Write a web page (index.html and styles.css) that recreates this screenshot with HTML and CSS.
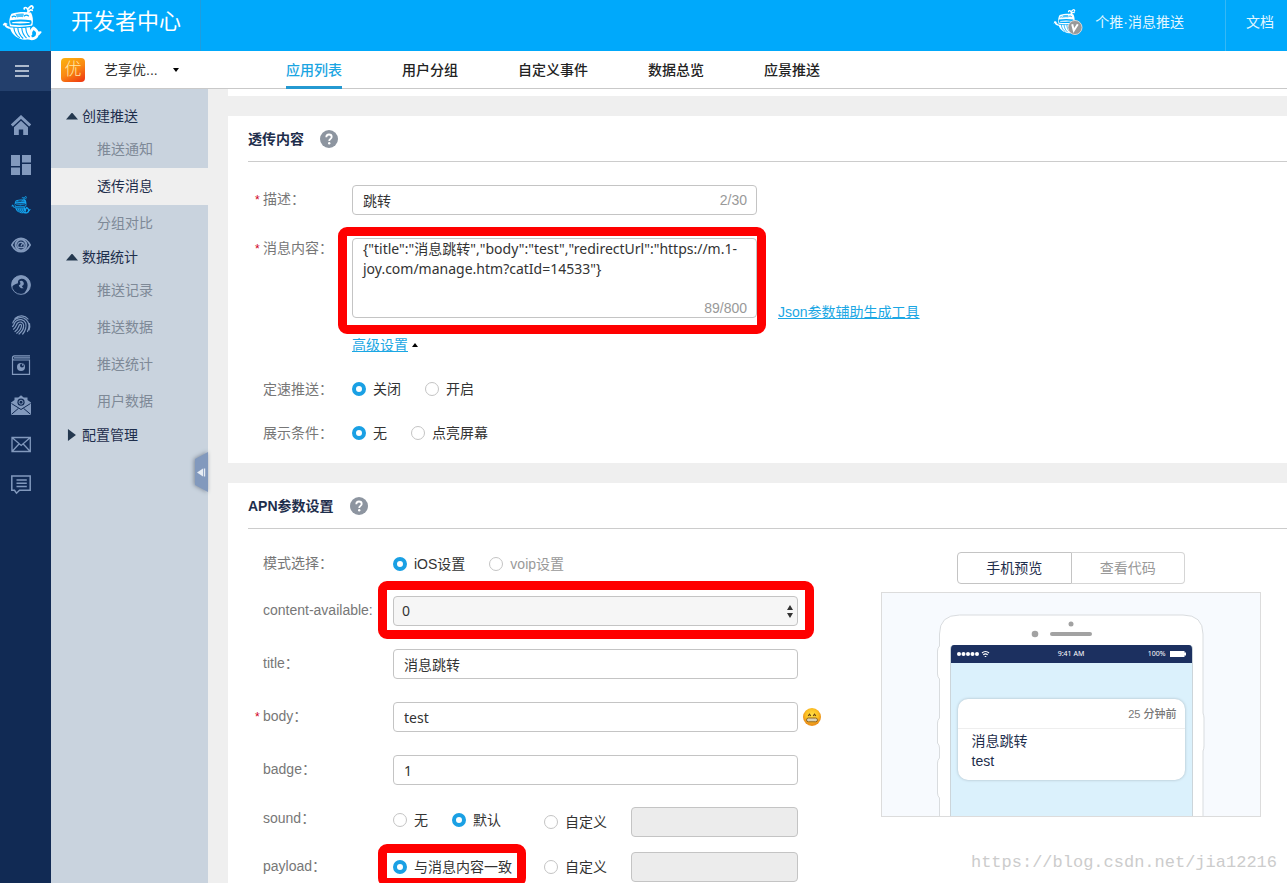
FILE: index.html
```html
<!DOCTYPE html>
<html lang="zh-CN">
<head>
<meta charset="utf-8">
<meta name="viewport" content="width=device-width, initial-scale=1">
<title>开发者中心</title>
<link rel="stylesheet" href="styles.css">
</head>
<body>
<svg class="defs" width="0" height="0" aria-hidden="true">
  <symbol id="whale" viewBox="0 0 40 38">
    <g fill="none" stroke="currentColor" stroke-linecap="round" stroke-linejoin="round">
      <path stroke-width="1.700" d="M25.500 9.500c.8-2 .8-3.500.2-4.700M25.500 5C24.500 3 22 3 22.200 5M26 5c1-1 1.500-1.500 2-2.200M28.500 2.500c1.500-1.300 3.200.3 2.200 1.800M27 7.300c.8-1.300 2-1.600 3.200-1"/>
      <path stroke-width="2.200" d="M2.800 19.800c.8 2.700 3 4 5.700 4.200"/>
      <path stroke-width="1.400" d="M1.500 20.800 3 19.500l1.800.6"/>
      <path stroke-width="2.800" d="M26 33.800c4.500 2.200 9.300.2 9.500-4 .1-2.600-1.800-4.300-4-5.800-2.300 2.300-3.300 4.300-2.600 6.300"/>
      <path stroke-width="1.700" d="M35.500 28.500l3.200-.3-2 2.200"/>
    </g>
    <path fill="currentColor" d="M9.500 9.800C15 7.800 23 7.500 29 8.500c1.800 3.200 2.500 8 1.500 12.500-1.200 1.200-2 1.800-2.500 2.800.3 4 .8 7.500 2 9.700-3 2.500-8.500 3-12.500 1C11.500 32 8 27.500 7.800 21.500 6.800 17.500 7.400 13 9.500 9.800z"/>
    <g fill="none" stroke="var(--whale-gap)">
      <path stroke-width="1.900" stroke-linejoin="round" d="M9 17.200c6-.8 13-.9 19.500 0 .3 1 .2 1.700-.2 2.500-6.500.8-12.800.9-18.800.2z"/>
      <path stroke-width="1.100" d="M7.500 22.800c7 1 14.500 1 22-.4M11.800 23.500c.5 4.500 2.500 8 6 10.300M15.800 23.800c.3 4.500 2.200 8 5.400 10.700M19.800 24c.2 4 1.800 7.500 4.700 10M23.800 23.800c.2 3.600 1.200 7 3.800 9.200"/>
      <path stroke-width="1.300" d="M9.800 13.300c1.200-1.300 3-1.300 4.200-.2M22 12.300c1.400-1.400 3.400-1.400 4.800-.1"/>
    </g>
    <path fill="var(--whale-gap)" d="M13.500 10.300c3-.7 6-.8 8.500-.6l-1 3.500c-2-.2-4-.1-6 .3z" opacity=".7"/>
  </symbol>
  <symbol id="help" viewBox="0 0 18 18">
    <circle cx="9" cy="9" r="9" fill="#8d95a0"/>
    <path d="M6.300 7.200C6.300 5.500 7.400 4.500 9 4.500s2.700 1 2.700 2.400c0 1.900-2.500 2-2.500 4" fill="none" stroke="#fff" stroke-width="1.800"/>
    <circle cx="9.200" cy="13.300" r="1.200" fill="#fff"/>
  </symbol>
</svg>

<header class="topbar">
  <a class="topbar__logo" href="#" aria-label="首页"><svg width="40" height="38"><use href="#whale"/></svg></a>
  <h1 class="topbar__title">开发者中心</h1>
  <a class="topbar__account" href="#">
    <svg width="30" height="28" viewBox="0 0 30 28" aria-hidden="true">
      <use href="#whale" width="28" height="27"/>
      <circle cx="22" cy="19.500" r="7" fill="#999" stroke="#d8d8d8"/>
      <path d="M19.200 16.200l1.600 6.300 4-6.300" fill="none" stroke="#fff" stroke-width="2"/>
    </svg>
    <span>个推·消息推送</span>
  </a>
  <a class="topbar__docs" href="#">文档</a>
</header>

<div class="shell">
  <nav class="rail" aria-label="产品">
    <button class="rail__menu" type="button" aria-label="菜单"><svg width="14" height="14" viewBox="0 0 14 14"><path d="M0 2h14M0 7h14M0 12h14" stroke="#dce3ed" stroke-width="1.700"/></svg></button>
    <div class="rail__items">
      <a class="rail__item" href="#" aria-label="首页"><svg viewBox="0 0 20 20"><path d="M.8 10.500 10 2l9.200 8.500" fill="none" stroke="currentColor" stroke-width="3"/><path fill="currentColor" d="M3 12.200 10 5.800l7 6.400V20h-4.800v-5.500H7.800V20H3z"/></svg></a>
      <a class="rail__item" href="#" aria-label="面板"><svg viewBox="0 0 20 20"><path fill="currentColor" d="M0 0h9v11H0zM11 0h9v7.500h-9zM0 12.500h9V20H0zM11 9h9v11h-9z"/></svg></a>
      <a class="rail__item rail__item--active" href="#" aria-label="消息推送"><svg viewBox="0 0 40 38"><use href="#whale"/></svg></a>
      <a class="rail__item" href="#" aria-label="统计"><svg viewBox="0 0 20 20"><g fill="none" stroke="currentColor"><path stroke-width="1.600" d="M.8 10C3 6 6 3.300 10 3.300S17 6 19.200 10C17 14 14 16.700 10 16.700S3 14 .8 10z"/><circle cx="10" cy="10" r="5.400" stroke-width="2"/><path stroke-width="1.400" d="M7 12.500c-1-3 .5-5.300 3-5.300s4 2.300 3 5.300M10 11l1.500-2.500M7 12.500h6"/></g></svg></a>
      <a class="rail__item" href="#" aria-label="画像"><svg viewBox="0 0 20 20"><circle cx="10" cy="10" r="9.400" fill="none" stroke="currentColor" stroke-width=".9"/><path fill="currentColor" d="M.8 12C-.5 5 4 .5 10 .5c6.500 0 10.500 5.500 9.200 11.500-.9 3.800-3.600 6.500-7.200 7.300 3.600-3.300 5.300-7 4.300-11C15.500 5 13 3.500 10.300 3.800 7.700 4.200 6.600 6 7 8.300 5 9.200 2.500 9.500.8 12z"/><path fill="currentColor" d="M8.600 6.500c1.600-1.500 3.900-.5 4.200 1.700.2 1.600-.8 2.500-2 2.600.3 1.200 1 1.900 2 2.500-2.800.4-4.600-.9-5-3.300 1.700.2 2.300-1.600.8-3.500z"/></svg></a>
      <a class="rail__item" href="#" aria-label="指纹"><svg viewBox="0 0 20 20"><g fill="none" stroke="currentColor" stroke-width="1.200" stroke-linecap="round"><path d="M4 3.500C8-.2 14 .2 17 4M1.800 8C3.200 2.500 11 .8 15 4.500c3.500 3 3.500 8 1.500 12M1.500 11.500c1.500-1 1.500-3 3-4.800C8 3 13 4.500 14.700 8c1 3-.2 8-3 11M2.500 14.200c2.500-1.500 2.500-4 4-6C9 6 12 7 12.600 10c.3 3-1.600 6.600-4.600 9M4 16.500c3-2 3.400-4.500 4.300-6.500 1-1.200 2.500-.5 2.200 1-.3 2.300-2 5-4.800 7.200M18.500 8.500c.5 2 .3 4.500-.5 6.500"/></g></svg></a>
      <a class="rail__item" href="#" aria-label="应用"><svg viewBox="0 0 20 20"><path fill="none" stroke="currentColor" stroke-width="1.200" d="M19 .8H3.500C.8.800.8 5 3.500 5h15v14.300h-17V3M3 2.900h16"/><circle cx="10" cy="12" r="4" fill="currentColor"/><circle cx="11" cy="10.500" r="2" fill="#112a54"/><circle cx="11.800" cy="9.800" r=".9" fill="currentColor"/></svg></a>
      <a class="rail__item" href="#" aria-label="邮件"><svg viewBox="0 0 20 20"><path fill="currentColor" d="M0 7.500 3.500 5V2.500h3.800L10 .3l2.700 2.200h3.800V5L20 7.500V20H0z"/><circle cx="10" cy="7.200" r="3.600" fill="#112a54"/><circle cx="10" cy="7.200" r="2" fill="none" stroke="currentColor"/><path d="M.5 8.500 10 14.500l9.500-6M.5 19.300l7-6M19.500 19.300l-7-6" fill="none" stroke="#112a54"/></svg></a>
      <a class="rail__item" href="#" aria-label="信件"><svg viewBox="0 0 20 20"><path fill="none" stroke="currentColor" stroke-width="1.300" d="M1 2.500h18.300v14H1zM1 2.500l9.200 8 9.100-8M1 16.500 8 9M19.300 16.500 12.200 9"/></svg></a>
      <a class="rail__item" href="#" aria-label="反馈"><svg viewBox="0 0 20 20"><path fill="none" stroke="currentColor" stroke-width="1.500" d="M.8 1h18.400v14.300H8.500l-3 2.900-2-2.900H.8zM5.500 5h10.300M5.500 8.200h10.300M5.500 11.400h10.300"/></svg></a>
    </div>
  </nav>

  <div class="workspace">
    <div class="appbar">
      <button class="appbar__switch" type="button">
        <span class="appbar__icon">优</span>
        <span class="appbar__name">艺享优...</span>
        <span class="caret caret--down"></span>
      </button>
      <nav class="tabs" aria-label="主导航">
        <a class="tabs__item tabs__item--active" href="#">应用列表</a>
        <a class="tabs__item" href="#">用户分组</a>
        <a class="tabs__item" href="#">自定义事件</a>
        <a class="tabs__item" href="#">数据总览</a>
        <a class="tabs__item" href="#">应景推送</a>
      </nav>
    </div>

    <div class="columns">
      <nav class="sidebar" aria-label="推送菜单">
        <button class="sidebar__group" type="button"><i class="tri tri--up"></i>创建推送</button>
        <a class="sidebar__link" href="#">推送通知</a>
        <a class="sidebar__link sidebar__link--active" href="#">透传消息</a>
        <a class="sidebar__link" href="#">分组对比</a>
        <button class="sidebar__group" type="button"><i class="tri tri--up"></i>数据统计</button>
        <a class="sidebar__link" href="#">推送记录</a>
        <a class="sidebar__link" href="#">推送数据</a>
        <a class="sidebar__link" href="#">推送统计</a>
        <a class="sidebar__link" href="#">用户数据</a>
        <button class="sidebar__group" type="button"><i class="tri tri--right"></i>配置管理</button>
        <button class="sidebar__fold" type="button" aria-label="收起"><svg width="13" height="40" viewBox="0 0 13 40"><path d="M13 0 0 7v26l13 7z" fill="#8299bd"/><path d="M8 16.500v8l-6-4zM8.800 16.500h1.400v8H8.800z" fill="#e6ecf4"/></svg></button>
      </nav>

      <main class="content">
        <div class="card card--tail"></div>

        <section class="card">
          <h2 class="card__head">透传内容 <svg width="18" height="18" role="img" aria-label="帮助"><use href="#help"/></svg></h2>
          <form class="form form--message">
            <div class="row">
              <label class="label label--required" for="desc">描述：</label>
              <div class="field"><input class="input" id="desc" type="text" value="跳转"><span class="counter">2/30</span></div>
            </div>
            <div class="row row--tight">
              <label class="label label--required label--top" for="msg">消息内容：</label>
              <div class="field"><textarea class="input input--area" id="msg">{"title":"消息跳转","body":"test","redirectUrl":"https://m.1-joy.com/manage.htm?catId=14533"}</textarea><span class="counter counter--area">89/800</span><span class="mark mark--area"></span></div>
              <a class="link row__tool" href="#">Json参数辅助生成工具</a>
            </div>
            <div class="row row--advanced"><span class="label"></span><a class="link" href="#">高级设置</a><span class="caret caret--up"></span></div>
            <div class="row row--radios" role="group" aria-labelledby="speed">
              <span class="label" id="speed">定速推送：</span>
              <label class="radio"><input type="radio" name="speed" checked>关闭</label>
              <label class="radio"><input type="radio" name="speed">开启</label>
            </div>
            <div class="row row--radios" role="group" aria-labelledby="cond">
              <span class="label" id="cond">展示条件：</span>
              <label class="radio"><input type="radio" name="cond" checked>无</label>
              <label class="radio"><input type="radio" name="cond">点亮屏幕</label>
            </div>
          </form>
        </section>

        <section class="card">
          <h2 class="card__head">APN参数设置 <svg width="18" height="18" role="img" aria-label="帮助"><use href="#help"/></svg></h2>
          <div class="apn">
            <form class="form form--apn">
              <div class="row row--mode" role="group" aria-labelledby="mode">
                <span class="label" id="mode">模式选择：</span>
                <label class="radio"><input type="radio" name="mode" checked>iOS设置</label>
                <label class="radio radio--muted"><input type="radio" name="mode">voip设置</label>
              </div>
              <div class="row">
                <label class="label" for="avail">content-available:</label>
                <div class="field"><select class="input input--select" id="avail"><option>0</option><option>1</option></select><svg class="arrows" width="6" height="13" viewBox="0 0 6 13" aria-hidden="true"><path d="M3 0l3 5H0zM3 13l3-5H0z" fill="#333"/></svg><span class="mark mark--select"></span></div>
              </div>
              <div class="row">
                <label class="label" for="title">title：</label>
                <div class="field"><input class="input" id="title" type="text" value="消息跳转"></div>
              </div>
              <div class="row">
                <label class="label label--required" for="body">body：</label>
                <div class="field"><input class="input" id="body" type="text" value="test"></div>
                <button class="emoji" type="button" aria-label="表情"><svg width="18" height="18" viewBox="0 0 18 18"><defs><radialGradient id="face" cy=".4"><stop offset="0" stop-color="#ffe04a"/><stop offset=".7" stop-color="#fcc021"/><stop offset="1" stop-color="#ec941c"/></radialGradient></defs><circle cx="9" cy="9" r="9" fill="url(#face)"/><path d="M5.200 8 6.500 6.200 7.800 8M10.200 8l1.300-1.800L12.800 8" fill="none" stroke="#694311" stroke-width="1.200"/><rect x="3.500" y="10" width="11" height="3.800" rx="1.900" fill="#d9d2b8" stroke="#94651b"/></svg></button>
              </div>
              <div class="row row--badge">
                <label class="label" for="badge">badge：</label>
                <div class="field"><input class="input" id="badge" type="text" value="1"></div>
              </div>
              <div class="row row--sound" role="group" aria-labelledby="sound">
                <span class="label label--sound" id="sound">sound：</span>
                <div class="field field--options">
                  <label class="radio radio--raised"><input type="radio" name="sound">无</label>
                  <label class="radio radio--raised"><input type="radio" name="sound" checked>默认</label>
                  <label class="radio radio--custom"><input type="radio" name="sound">自定义</label>
                  <input class="input input--custom" type="text" aria-label="自定义 sound" disabled>
                </div>
              </div>
              <div class="row" role="group" aria-labelledby="payload">
                <span class="label" id="payload">payload：</span>
                <div class="field field--options">
                  <label class="radio"><input type="radio" name="payload" checked>与消息内容一致<span class="mark mark--radio"></span></label>
                  <label class="radio radio--custom"><input type="radio" name="payload">自定义</label>
                  <input class="input input--custom" type="text" aria-label="自定义 payload" disabled>
                </div>
              </div>
            </form>

            <aside class="preview">
              <div class="switch">
                <button class="switch__btn switch__btn--active" type="button">手机预览</button>
                <button class="switch__btn" type="button">查看代码</button>
              </div>
              <div class="stage">
                <svg class="stage__shell" width="378" height="223" viewBox="0 0 378 223" aria-hidden="true">
                  <path fill="#fff" stroke="#d9dcdf" d="M57.500 230V205q-2-2-2-5v-30q0-3 2-5v-10q0-3-2-5V130q0-3 2-5V86q-2-2-2-5V58q0-3 2-5V41q0-19 20-19H301q20 0 20 19V120q1 3 1 5v28q0 3-1 5v75"/>
                  <circle cx="189" cy="31" r="2.500" fill="#a2a2a2"/><circle cx="153" cy="41" r="3.300" fill="#a2a2a2"/>
                  <rect x="168" y="39" width="42" height="4" rx="2" fill="#a2a2a2"/>
                </svg>
                <div class="screen">
                  <div class="status">
                    <svg width="34" height="8" viewBox="0 0 34 8" aria-hidden="true"><g fill="#fff"><circle cx="2" cy="4" r="2"/><circle cx="6.500" cy="4" r="2"/><circle cx="11" cy="4" r="2"/><circle cx="15.500" cy="4" r="2"/><circle cx="20" cy="4" r="2"/></g><path d="M25 3q3.500-3 7 0M26.300 4.800q2.200-1.800 4.400 0M27.700 6.500h1.600" fill="none" stroke="#fff" stroke-width="1.200"/></svg>
                    <span>9:41 AM</span>
                    <span class="status__power">100% <svg width="16" height="6" viewBox="0 0 16 6" aria-hidden="true"><path d="M0 0h14.500v1.500H16v3h-1.500V6H0z" fill="#fff"/></svg></span>
                  </div>
                  <div class="notice">
                    <div class="notice__time">25 分钟前</div>
                    <div class="notice__text"><div>消息跳转</div><div>test</div></div>
                  </div>
                </div>
              </div>
            </aside>
          </div>
        </section>
      </main>
    </div>
  </div>
</div>
<div class="watermark">https://blog.csdn.net/jia12216</div>
</body>
</html>
```
FILE: styles.css
```css
* { box-sizing: border-box; }

body {
  margin: 0;
  height: 100vh;
  display: flex;
  flex-direction: column;
  overflow: hidden;
  background: #efefef;
  color: #333;
  font: 14px/20px "Liberation Sans", "Noto Sans CJK SC", sans-serif;
}

a { color: inherit; text-decoration: none; }
button { padding: 0; border: 0; background: none; color: inherit; font: inherit; text-align: left; }
svg { display: block; flex: none; }
.defs { position: absolute; }

/* top bar */
.topbar {
  --whale-gap: #00a9fb;
  flex: none;
  display: flex;
  height: 51px;
  background: #00a9fb;
  color: #e3f7ff;
  line-height: 44px;
}
.topbar__logo {
  width: 51px;
  padding: 4px 2px;
  border-right: 1px solid #1f9ddd;
  color: #fff;
}
.topbar__title {
  margin: 0;
  width: 150px;
  padding-left: 20px;
  border-right: 1px solid #1f9ddd;
  color: #fff;
  font-size: 22px;
  font-weight: 400;
}
.topbar__account {
  display: flex;
  gap: 12px;
  margin-left: auto;
  padding-right: 41px;
}
.topbar__account svg { margin-top: 8px; color: #fff; }
.topbar__docs { padding: 0 13px 0 20px; border-left: 1px solid #35b8f5; }

.shell { flex: 1; display: flex; min-height: 0; }

/* icon rail */
.rail { --whale-gap: #112a54; flex: none; width: 51px; background: #112a54; color: #8299bd; }
.rail__menu {
  display: flex;
  align-items: center;
  width: 100%;
  height: 40px;
  padding-left: 15px;
  background: #233f6c;
}
.rail__items { padding: 14px 9px 0 11px; }
.rail__item { display: flex; align-items: center; height: 40px; }
.rail__item svg { width: 20px; height: 20px; }
.rail__item--active { color: #14a5f0; }

.workspace { flex: 1; min-width: 0; display: flex; flex-direction: column; }

/* application bar */
.appbar {
  flex: none;
  display: flex;
  height: 38px;
  background: #fff;
  border-bottom: 1px solid #c9c9c9;
}
.appbar__switch { display: flex; align-items: center; width: 235px; padding-left: 10px; }
.appbar__icon {
  width: 24px;
  height: 24px;
  margin-right: 19px;
  border-radius: 4px;
  background: linear-gradient(150deg, #fbb40f, #fa8a12 50%, #ee3010);
  color: #ffe7a6;
  font-size: 17px;
  font-weight: 300;
  line-height: 24px;
  text-align: center;
}
.appbar__name { margin-right: 15px; }
.caret { border: 3px solid transparent; }
.caret--down { border-top: 4px solid #000; border-bottom: 0; }
.caret--up { border-bottom: 4px solid #000; border-top: 0; }
.tabs { display: flex; gap: 60px; }
.tabs__item { height: 38px; line-height: 38px; font-weight: 500; color: #222; }
.tabs__item--active { color: #1aa5e2; border-bottom: 3px solid #2499d1; }

.columns { flex: 1; display: flex; min-height: 0; }

/* side menu */
.sidebar { position: relative; flex: none; width: 157px; padding-top: 12px; background: #c9d3de; }
.sidebar__group {
  display: flex;
  align-items: center;
  width: 100%;
  height: 30px;
  padding-left: 15px;
  color: #1e2e4c;
}
.tri { width: 12px; margin-right: 4px; height: 7px; background: #24384f; }
.tri--up { clip-path: polygon(50% 0, 100% 100%, 0 100%); }
.tri--right { height: 12px; clip-path: polygon(16% 0, 83% 50%, 16% 100%); }
.sidebar__link { display: block; height: 37px; padding-left: 46px; line-height: 36px; color: #7e8997; }
.sidebar__link--active { background: #efefef; color: #1e2e4c; }
.sidebar__fold { position: absolute; right: 0; top: 363px; filter: drop-shadow(-1px 0 2px #7d8896); }

/* cards */
.content { flex: 1; min-width: 0; padding-left: 20px; overflow: hidden; }
.card { margin-bottom: 20px; padding-left: 20px; background: #fff; }
.card--tail { height: 7px; }
.card__head {
  display: flex;
  align-items: center;
  gap: 16px;
  height: 46px;
  margin: 0;
  border-bottom: 1px solid #ccc;
  color: #1e2e4c;
  font-size: 14px;
  font-weight: 600;
}

/* form rows */
.form { padding-left: 7px; }
.form--message { padding-top: 23px; padding-bottom: 20px; }
.form--apn { flex: 1; padding-top: 20px; }
.row { display: flex; margin-bottom: 23px; }
.row--tight { margin-bottom: 17px; }
.row--advanced { height: 20px; margin-bottom: 24px; align-items: center; }
.row--advanced .caret { margin-left: 4px; }
.row--radios { height: 20px; margin-bottom: 24px; align-items: center; }
.row--radios:last-child { margin-bottom: 0; }
.row--mode { height: 30px; margin-bottom: 17px; }
.row--badge { margin-bottom: 22px; }
.row--sound { margin-bottom: 15px; }
.row__tool { align-self: flex-end; margin: 0 0 -4px 21px; }
.label { flex: none; padding-left: 8px; line-height: 28px; color: #777; }
.form--message .label { width: 97px; }
.form--apn .label { width: 138px; }
.form .label--sound { line-height: 22px; }
.label--required { padding-left: 0; }
.label--required::before { content: "*"; display: inline-block; width: 8px; color: #d0021b; font-size: 12px; }
.form .label--top { line-height: 20px; }
.link { color: #1ba7e4; text-decoration: underline; }

.field { position: relative; flex: none; width: 405px; }
.field--options { display: flex; align-items: center; }
.input {
  display: block;
  width: 100%;
  height: 30px;
  margin: 0;
  padding: 0 10px;
  border: 1px solid #c4c4c4;
  border-radius: 4px;
  background: #fff;
  color: #333;
  font: 14px/20px "Noto Sans", "Noto Sans CJK SC", sans-serif;
}
.input--area { height: 80px; resize: none; overflow: hidden; }
.input--select { appearance: none; padding: 0 8px; background: #f6f6f6; }
.input--custom { width: 167px; margin-left: 24px; background: #ececec; }
.counter { position: absolute; right: 10px; top: 5px; color: #999; }
.counter--area { top: auto; bottom: 0; }
.arrows { position: absolute; right: 5px; top: 9px; }

.radio { position: relative; display: flex; align-items: center; gap: 7px; margin-right: 24px; white-space: nowrap; }
.radio--muted { color: #999; }
.radio--raised { padding-bottom: 4px; }
.radio--custom { margin-left: auto; margin-right: 0; }
.radio input {
  appearance: none;
  width: 14px;
  height: 14px;
  margin: 0;
  border: 1px solid #c4c4c4;
  border-radius: 50%;
  background: #fff;
}
.radio input:checked { border: 4px solid #1aa0e4; }
.emoji { margin-left: 5px; align-self: center; }

/* red highlight frames drawn around fields */
.mark { position: absolute; border: 9px solid #f00; border-radius: 9px; pointer-events: none; }
.mark--area { inset: -11px -9px -16px -14px; }
.mark--select { inset: -15px -16px -13px -15px; }
.mark--radio { inset: -13px -14px -10px -15px; }

/* phone preview */
.apn { display: flex; align-items: flex-start; }
.preview { flex: none; width: 380px; margin: 23px 26px 0 0; }
.switch { display: flex; width: 228px; margin: 0 auto 8px; }
.switch__btn {
  flex: 1;
  height: 32px;
  border: 1px solid #d5d5d5;
  border-left: 0;
  border-radius: 0 4px 4px 0;
  color: #999;
  text-align: center;
}
.switch__btn--active { border: 1px solid #c4c4c4; border-radius: 4px 0 0 4px; color: #1e2e4c; }
.stage {
  position: relative;
  height: 225px;
  padding-top: 52px;
  border: 1px solid #dcdcdc;
  background: #f7fafe;
  overflow: hidden;
}
.stage__shell { position: absolute; inset: 0; }
.screen {
  position: relative;
  width: 243px;
  height: 180px;
  margin: 0 auto;
  border: 1px solid #ccd5da;
  border-top: 0;
  border-radius: 4px 4px 0 0;
  background: #dbf1fc;
  overflow: hidden;
}
.status {
  display: grid;
  grid-template-columns: 1fr auto 1fr;
  align-items: center;
  height: 18px;
  padding: 0 6px;
  background: #1c3060;
  color: #fff;
  font: 7px/18px "Noto Sans", sans-serif;
}
.status__power { display: flex; align-items: center; justify-content: flex-end; gap: 4px; }
.notice {
  margin: 36px 7px 0;
  border-radius: 10px;
  background: #fff;
  box-shadow: 0 0 3px #a8b8c2;
}
.notice__time {
  height: 30px;
  padding-right: 8px;
  border-bottom: 1px solid #eee;
  color: #777;
  font: 500 11px/30px "Liberation Sans", "Noto Sans CJK SC", sans-serif;
  text-align: right;
}
.notice__text { padding: 2px 14px 9px; color: #1e2e4c; }

.watermark {
  position: absolute;
  right: 10px;
  bottom: 10px;
  color: #ccc;
  font: 17px/20px "Liberation Mono", monospace;
}
```
